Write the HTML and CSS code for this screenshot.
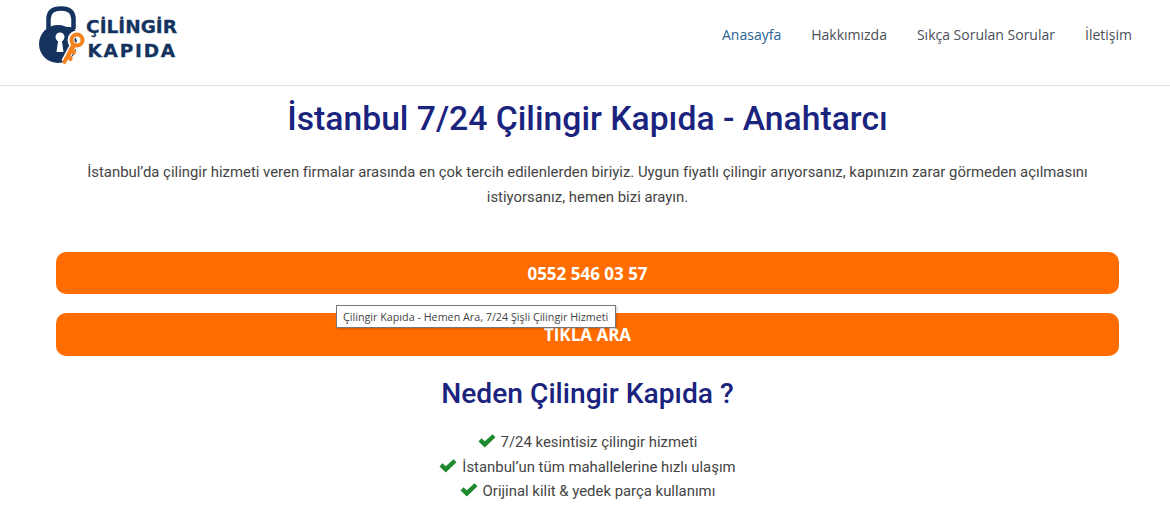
FILE: index.html
```html
<!DOCTYPE html>
<html lang="tr">
<head>
  <meta charset="UTF-8">
  <meta name="viewport" content="width=device-width, initial-scale=1.0">
  <title>Çilingir Kapıda</title>
  <link rel="stylesheet" href="styles.css">
</head>
<body>
  <header class="header">
    <a href="#" class="logo">
      <svg class="logo-icon" width="47" height="60" viewBox="0 0 47 60">
        <path d="M10.500 24 V14 C10.500 7 15 3.500 23 3.500 C31 3.500 35.500 7 35.500 14 V24" fill="none" stroke="#14335f" stroke-width="4.500"/>
        <circle cx="20" cy="39" r="19" fill="#14335f"/>
        <rect x="19" y="22" width="19" height="22" rx="6" fill="#14335f"/>
        <circle cx="22" cy="32" r="4.500" fill="#fff"/>
        <path d="M20.500 33 H23.500 L25.500 47 H18.500 Z" fill="#fff"/>
        <g fill="none" stroke="#fff" stroke-width="7">
          <path d="M36 39 L26.500 57"/>
          <circle cx="39" cy="35" r="6"/>
        </g>
        <path d="M34.500 37 L24 57.500 L27 59.500 L30 54.500 L33 56.500 L35 53 L32.500 51 L34 48.500 L36.500 50 L38.500 46.500 L36 44.500 L39.500 39 Z" fill="#f58220"/>
        <circle cx="39" cy="35" r="5.500" fill="none" stroke="#f58220" stroke-width="4"/>
      </svg>
      <span class="logo-text">
        <span>ÇİLİNGİR</span>
        <span class="logo-second">KAPIDA</span>
      </span>
    </a>
    <nav class="nav">
      <a href="#" class="nav-item active">Anasayfa</a>
      <a href="#" class="nav-item">Hakkımızda</a>
      <a href="#" class="nav-item">Sıkça Sorulan Sorular</a>
      <a href="#" class="nav-item">İletişim</a>
    </nav>
  </header>

  <main class="content">
    <h1>İstanbul 7/24 Çilingir Kapıda - Anahtarcı</h1>
    <p class="intro">İstanbul’da çilingir hizmeti veren firmalar arasında en çok tercih edilenlerden biriyiz. Uygun fiyatlı çilingir arıyorsanız, kapınızın zarar görmeden açılmasını istiyorsanız, hemen bizi arayın.</p>

    <a href="#" class="call-button first">0552 546 03 57</a>
    <div class="second-wrap">
      <a href="#" class="call-button">TIKLA ARA</a>
      <div class="tooltip">Çilingir Kapıda - Hemen Ara, 7/24 Şişli Çilingir Hizmeti</div>
    </div>

    <h2>Neden Çilingir Kapıda ?</h2>
    <ul class="checks">
      <li><svg class="check" width="18" height="14" viewBox="0 0 18 14"><path d="M0.500 7.500 L3.500 4.300 L6.800 7.300 L14.500 0.300 L17.500 3.300 L6.800 13.500 Z" fill="#1f8a2e"/></svg>7/24 kesintisiz çilingir hizmeti</li>
      <li><svg class="check" width="18" height="14" viewBox="0 0 18 14"><path d="M0.500 7.500 L3.500 4.300 L6.800 7.300 L14.500 0.300 L17.500 3.300 L6.800 13.500 Z" fill="#1f8a2e"/></svg>İstanbul’un tüm mahallelerine hızlı ulaşım</li>
      <li><svg class="check" width="18" height="14" viewBox="0 0 18 14"><path d="M0.500 7.500 L3.500 4.300 L6.800 7.300 L14.500 0.300 L17.500 3.300 L6.800 13.500 Z" fill="#1f8a2e"/></svg>Orijinal kilit &amp; yedek parça kullanımı</li>
    </ul>
  </main>
</body>
</html>
```

FILE: styles.css
```css
* {
  margin: 0;
  padding: 0;
  box-sizing: border-box;
}

body {
  font-family: Roboto, "Liberation Sans", sans-serif;
  background: #fff;
  color: #444;
  overflow: hidden;
}

a {
  text-decoration: none;
}

.header {
  height: 86px;
  display: flex;
  align-items: center;
  justify-content: space-between;
  padding: 0 38px 16px 38px;
  border-bottom: 1px solid #e0e0e0;
}

.logo {
  display: flex;
  align-items: center;
}

.logo-text {
  display: flex;
  flex-direction: column;
  align-items: flex-end;
  width: 92px;
  padding-top: 8px;
  font-family: "DejaVu Sans", sans-serif;
  font-weight: 700;
  font-size: 18.500px;
  line-height: 24px;
  color: #14335f;
  -webkit-text-stroke: 0.300px #14335f;
}

.logo-second {
  letter-spacing: 1.800px;
}

.nav {
  display: flex;
  gap: 30px;
}

.nav-item {
  font-family: "Open Sans", sans-serif;
  font-size: 14px;
  color: #4b4f58;
}

.nav-item.active {
  color: #2a6496;
}

.content {
  padding: 0 51px 0 56px;
  text-align: center;
}

h1 {
  font-size: 33.700px;
  font-weight: 500;
  line-height: 40px;
  color: #1a237e;
  margin-top: 13px;
}

.intro {
  font-size: 14.900px;
  line-height: 25px;
  margin-top: 21px;
  padding: 0 10px;
}

.call-button {
  display: block;
  height: 43px;
  line-height: 43px;
  border-radius: 10px;
  background: #ff6d00;
  color: #fff;
  font-family: "Open Sans", sans-serif;
  font-weight: 700;
  font-size: 17px;
}

.call-button.first {
  height: 42px;
  line-height: 44px;
  margin-top: 42px;
}

.second-wrap {
  position: relative;
  margin-top: 19px;
}

.tooltip {
  position: absolute;
  top: -8px;
  left: 280px;
  width: 280px;
  height: 23px;
  border: 1px solid #767676;
  background: #fff;
  color: #444;
  font-family: "Open Sans", sans-serif;
  font-size: 10.750px;
  line-height: 22px;
  white-space: nowrap;
  text-align: left;
  padding-left: 6px;
  box-shadow: 1px 1px 2px rgba(0, 0, 0, 0.2);
}

h2 {
  font-size: 28.200px;
  font-weight: 500;
  line-height: 32px;
  color: #1a237e;
  margin-top: 22px;
}

.checks {
  list-style: none;
  margin-top: 20px;
  font-size: 14.900px;
  line-height: 24.500px;
}

.check {
  vertical-align: -1px;
  margin-right: 5px;
}
```
